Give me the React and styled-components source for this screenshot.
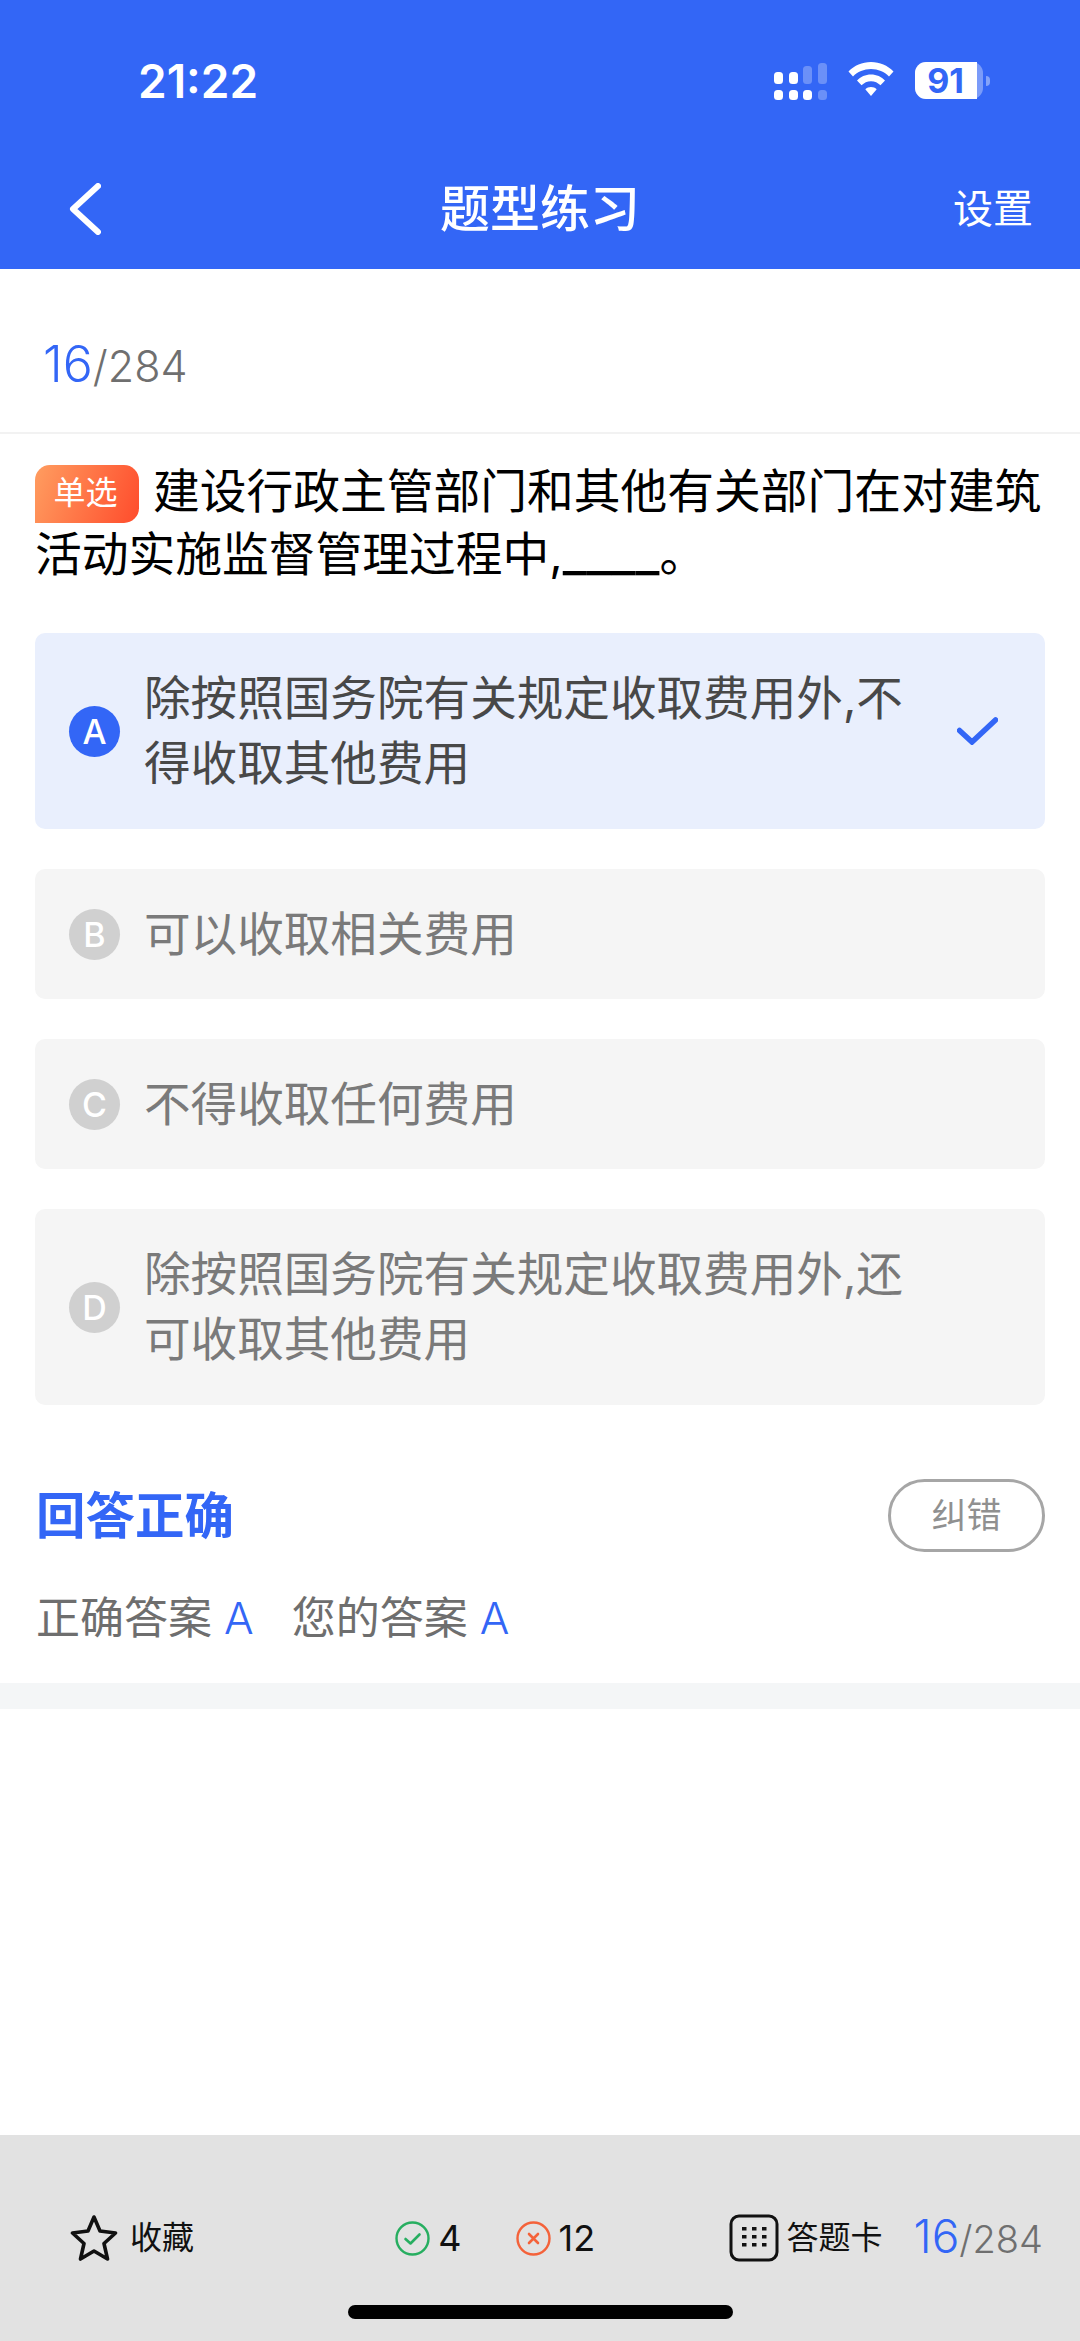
import React from 'react'
import styled, { createGlobalStyle } from 'styled-components'

const BLUE = '#3366f6'
const FONT = '"Inter", "Noto Sans CJK SC", sans-serif'

const GlobalStyle = createGlobalStyle`
  html, body {
    margin: 0;
    padding: 0;
    background: #fff;
  }
  * {
    box-sizing: border-box;
  }
`

const Page = styled.div`
  width: 1080px;
  height: 2341px;
  display: flex;
  flex-direction: column;
  overflow: hidden;
  background: #fff;
  font-family: ${FONT};
`

const Header = styled.header`
  height: 269px;
  flex: none;
  background: ${BLUE};
  color: #fff;
  display: flex;
  flex-direction: column;
`

const StatusBar = styled.div`
  height: 160px;
  padding: 57px 90px 0 138px;
  display: flex;
  justify-content: space-between;
  align-items: flex-start;
`

const Clock = styled.span`
  font-size: 46px;
  font-weight: 600;
  line-height: 48px;
`

const StatusIcons = styled.div`
  display: flex;
  align-items: flex-start;
  padding-top: 5px;
`

const WifiSlot = styled.div`
  margin-left: 20px;
`

const BatterySlot = styled.div`
  display: flex;
`

const BatteryBody = styled.div`
  position: relative;
  width: 68px;
  height: 37px;
  margin-left: 21px;
  padding-right: 7px;
  border-radius: 11px;
  background: rgba(255, 255, 255, 0.35);
  color: ${BLUE};
  font-size: 34px;
  font-weight: 700;
  line-height: 37px;
  text-align: center;
`

const BatteryFill = styled.div`
  position: absolute;
  inset: 0 6px 0 0;
  border-radius: 11px 0 0 11px;
  background: #fff;
`

const BatteryLabel = styled.span`
  position: relative;
`

const BatteryTip = styled.div`
  width: 4px;
  height: 10px;
  margin-left: 3px;
  border-radius: 0 4px 4px 0;
  background: rgba(255, 255, 255, 0.4);
  align-self: center;
`

const NavBar = styled.div`
  flex: 1;
  margin-top: -12px;
  padding: 0 47px;
  display: grid;
  grid-template-columns: 1fr auto 1fr;
  align-items: center;
`

const BackSlot = styled.div`
  display: flex;
  padding-left: 22px;
`

const Title = styled.div`
  font-size: 50px;
  font-weight: 500;
  line-height: 60px;
`

const NavAction = styled.div`
  justify-self: end;
  font-size: 40px;
  line-height: 50px;
`

const Counter = styled.div`
  height: 165px;
  flex: none;
  padding: 65px 0 0 43px;
  border-bottom: 2px solid #f2f2f2;
  display: flex;
  align-items: baseline;
  line-height: 60px;
`

const Current = styled.span`
  color: ${BLUE};
  font-size: ${(p) => p.size}px;
  font-weight: 300;
`

const Total = styled.span`
  color: #6f6f6f;
  font-size: ${(p) => p.size}px;
  font-weight: 300;
`

const Question = styled.section`
  padding: 26px 35px 0 35px;
  color: #000;
  font-size: 46.75px;
  line-height: 63px;
`

const Tag = styled.span`
  display: inline-block;
  width: 104px;
  height: 58px;
  margin-right: 14px;
  padding-right: 3px;
  vertical-align: 4px;
  border-radius: 15px 15px 15px 0;
  background: linear-gradient(110deg, #ff9d60 0%, #ff4c2c 100%);
  color: #fff;
  font-size: 32px;
  line-height: 56px;
  text-align: center;
`

const Blank = styled.span`
  font-size: 53px;
  line-height: 1;
`

const Options = styled.div`
  margin-top: 47px;
  padding: 0 35px;
  display: flex;
  flex-direction: column;
  gap: 40px;
`

const Option = styled.div`
  min-height: ${(p) => (p.$tall ? 196 : 130)}px;
  padding: 0 47px 0 34px;
  border-radius: 10px;
  background: ${(p) => (p.$selected ? '#e9effd' : '#f5f5f5')};
  color: ${(p) => (p.$selected ? '#484848' : '#7a7a7a')};
  display: flex;
  align-items: center;
  gap: 24px;
`

const Letter = styled.span`
  width: 51px;
  height: 51px;
  flex: none;
  border-radius: 50%;
  background: ${(p) => (p.$selected ? BLUE : '#d0d0d0')};
  color: #fff;
  font-size: 34px;
  font-weight: 500;
  line-height: 51px;
  text-align: center;
`

const OptionText = styled.div`
  flex: 1;
  font-size: 46.6px;
  line-height: 65px;
  white-space: pre-line;
`

const Result = styled.section`
  margin-top: 74px;
  padding: 0 35px 0 36px;
  display: flex;
  justify-content: space-between;
  align-items: center;
`

const ResultTitle = styled.h2`
  margin: 0;
  color: ${BLUE};
  font-size: 49.5px;
  font-weight: 700;
  line-height: 60px;
`

const ReportButton = styled.div`
  width: 157px;
  height: 73px;
  border: 3px solid #a6a6a6;
  border-radius: 37px;
  color: #909090;
  font-size: 35px;
  line-height: 66px;
  text-align: center;
`

const AnswerRow = styled.div`
  margin-top: 38px;
  padding: 0 36px;
  display: flex;
  gap: 38px;
  color: #6e6e6e;
  font-size: 44px;
  line-height: 56px;
`

const AnswerLetter = styled.span`
  margin-left: 12px;
  color: ${BLUE};
  font-weight: 300;
`

const Band = styled.div`
  height: 26px;
  flex: none;
  margin-top: 37px;
  background: #f4f6f7;
`

const Spacer = styled.div`
  flex: 1;
`

const BottomBar = styled.footer`
  height: 206px;
  flex: none;
  background: #e2e2e2;
  display: flex;
  flex-direction: column;
  align-items: center;
`

const BarRow = styled.div`
  width: 100%;
  height: 170px;
  padding: 79px 37px 0 70px;
  display: flex;
  align-items: flex-start;
  justify-content: space-between;
  color: #111;
`

const BarItem = styled.div`
  display: flex;
  align-items: center;
  gap: ${(p) => p.$gap}px;
  height: 48px;
  font-size: ${(p) => p.$size}px;
  line-height: 48px;
`

const BarGroup = styled.div`
  display: flex;
  align-items: center;
  gap: ${(p) => p.$gap}px;
  margin-left: ${(p) => p.$shift || 0}px;
`

const HomeIndicator = styled.div`
  width: 385px;
  height: 14px;
  border-radius: 7px;
  background: #000;
`

const BackIcon = () => (
  <svg width="32" height="52" viewBox="0 0 32 52" fill="none">
    <path d="M29 3 L4 26 L29 49" stroke="#fff" strokeWidth="6" strokeLinecap="round" strokeLinejoin="round" />
  </svg>
)

const SignalIcon = () => (
  <svg width="54" height="38" viewBox="0 0 54 38" fill="#fff">
    <rect x="0" y="10" width="9" height="12" rx="3.5" />
    <rect x="15" y="10" width="9" height="12" rx="3.5" />
    <rect x="29" y="4" width="9" height="18" rx="3.5" opacity="0.28" />
    <rect x="44" y="1" width="9" height="21" rx="3.5" opacity="0.28" />
    <rect x="0" y="28" width="9" height="10" rx="3.5" />
    <rect x="15" y="28" width="9" height="10" rx="3.5" />
    <rect x="29" y="28" width="9" height="10" rx="3.5" />
    <rect x="44" y="28" width="9" height="10" rx="3.5" opacity="0.28" />
  </svg>
)

const WifiIcon = () => (
  <svg width="46" height="36" viewBox="0 0 46 36" fill="#fff">
    <path d="M23 0 C14 0 6.500 3.500 0.500 9.500 L5 14.500 C9.500 9.800 16 7 23 7 C30 7 36.500 9.800 41 14.500 L45.500 9.500 C39.500 3.500 32 0 23 0 Z" />
    <path d="M23 12.500 C17.500 12.500 12.500 14.800 9 18.500 L13.500 23.300 C16 20.800 19.300 19.200 23 19.200 C26.700 19.200 30 20.800 32.500 23.300 L37 18.500 C33.500 14.800 28.500 12.500 23 12.500 Z" />
    <path d="M23 25 C20.800 25 18.800 25.900 17.300 27.300 L23 34 L28.700 27.300 C27.200 25.900 25.200 25 23 25 Z" />
  </svg>
)

const StarIcon = () => (
  <svg width="48" height="48" viewBox="0 0 48 48" fill="none">
    <path
      d="M24 3 L30 17 L45.500 19 L34 29.500 L37.500 45 L24 37 L10.500 45 L14 29.500 L2.500 19 L18 17 Z"
      stroke="#111"
      strokeWidth="3.600"
      strokeLinejoin="round"
    />
  </svg>
)

const RightIcon = () => (
  <svg width="35" height="35" viewBox="0 0 35 35" fill="none">
    <circle cx="17.500" cy="17.500" r="16" stroke="#27ae60" strokeWidth="2.400" />
    <path d="M10.500 18 L15.500 22.500 L24.500 13.500" stroke="#27ae60" strokeWidth="2.600" strokeLinecap="round" strokeLinejoin="round" />
  </svg>
)

const WrongIcon = () => (
  <svg width="35" height="35" viewBox="0 0 35 35" fill="none">
    <circle cx="17.500" cy="17.500" r="16" stroke="#f4623a" strokeWidth="2.400" />
    <path d="M13 13 L22 22 M22 13 L13 22" stroke="#f4623a" strokeWidth="2.600" strokeLinecap="round" />
  </svg>
)

const CardIcon = () => (
  <svg width="50" height="48" viewBox="0 0 50 48" fill="none">
    <rect x="2" y="2" width="46" height="44" rx="8" stroke="#111" strokeWidth="3" />
    {[14, 22, 30].map((y) =>
      [15, 25, 35].map((x) => <rect key={`${x}-${y}`} x={x - 2} y={y - 1} width="4.500" height="3.500" fill="#111" />)
    )}
  </svg>
)

const CheckIcon = () => (
  <svg width="41" height="28" viewBox="0 0 41 28" fill="none">
    <path d="M2.500 13.500 L15 25 L38.500 3" stroke={BLUE} strokeWidth="5.500" strokeLinecap="round" strokeLinejoin="miter" />
  </svg>
)

const optionList = [
  { key: 'A', text: '除按照国务院有关规定收取费用外,不\n得收取其他费用', selected: true, tall: true },
  { key: 'B', text: '可以收取相关费用' },
  { key: 'C', text: '不得收取任何费用' },
  { key: 'D', text: '除按照国务院有关规定收取费用外,还\n可收取其他费用', tall: true },
]

export default function App() {
  return (
    <Page>
      <GlobalStyle />
      <Header>
        <StatusBar>
          <Clock>21:22</Clock>
          <StatusIcons>
            <SignalIcon />
            <WifiSlot>
              <WifiIcon />
            </WifiSlot>
            <BatterySlot>
              <BatteryBody>
                <BatteryFill />
                <BatteryLabel>91</BatteryLabel>
              </BatteryBody>
              <BatteryTip />
            </BatterySlot>
          </StatusIcons>
        </StatusBar>
        <NavBar>
          <BackSlot>
            <BackIcon />
          </BackSlot>
          <Title>题型练习</Title>
          <NavAction>设置</NavAction>
        </NavBar>
      </Header>

      <Counter>
        <Current size={50}>16</Current>
        <Total size={43}>/284</Total>
      </Counter>

      <Question>
        <Tag>单选</Tag>
        建设行政主管部门和其他有关部门在对建筑活动实施监督管理过程中,<Blank>____</Blank>。
      </Question>

      <Options>
        {optionList.map((o) => (
          <Option key={o.key} $selected={o.selected} $tall={o.tall}>
            <Letter $selected={o.selected}>{o.key}</Letter>
            <OptionText>{o.text}</OptionText>
            {o.selected && <CheckIcon />}
          </Option>
        ))}
      </Options>

      <Result>
        <ResultTitle>回答正确</ResultTitle>
        <ReportButton>纠错</ReportButton>
      </Result>

      <AnswerRow>
        <span>
          正确答案<AnswerLetter>A</AnswerLetter>
        </span>
        <span>
          您的答案<AnswerLetter>A</AnswerLetter>
        </span>
      </AnswerRow>

      <Band />
      <Spacer />

      <BottomBar>
        <BarRow>
          <BarItem $size={32} $gap={12}>
            <StarIcon />
            收藏
          </BarItem>
          <BarGroup $gap={54} $shift={68}>
            <BarItem $size={36} $gap={8}>
              <RightIcon />4
            </BarItem>
            <BarItem $size={36} $gap={8}>
              <WrongIcon />12
            </BarItem>
          </BarGroup>
          <BarGroup $gap={31}>
            <BarItem $size={32} $gap={8}>
              <CardIcon />
              答题卡
            </BarItem>
            <BarItem $size={36} $gap={0}>
              <span>
                <Current size={46}>16</Current>
                <Total size={38}>/284</Total>
              </span>
            </BarItem>
          </BarGroup>
        </BarRow>
        <HomeIndicator />
      </BottomBar>
    </Page>
  )
}
